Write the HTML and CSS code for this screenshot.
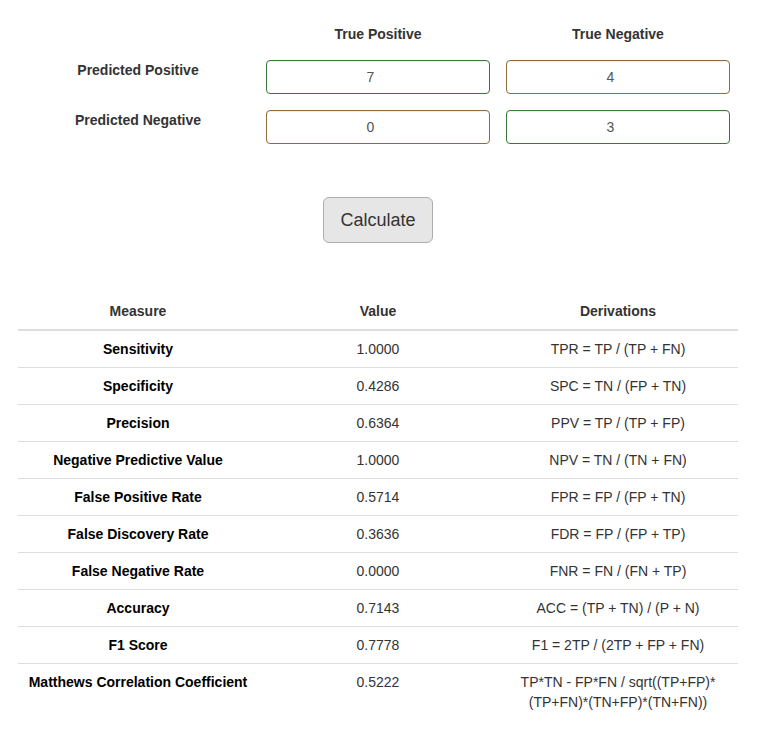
FILE: index.html
```html
<!DOCTYPE html>
<html>
<head>
<meta charset="utf-8">
<link rel="stylesheet" href="styles.css">
</head>
<body>
<div class="page">
  <div class="matrix">
    <div class="cell"></div>
    <div class="cell head">True Positive</div>
    <div class="cell head">True Negative</div>

    <div class="cell label">Predicted Positive</div>
    <div class="cell"><input class="field success" type="number" value="7"></div>
    <div class="cell"><input class="field warning" type="number" value="4"></div>

    <div class="cell label">Predicted Negative</div>
    <div class="cell"><input class="field warning" type="number" value="0"></div>
    <div class="cell"><input class="field success" type="number" value="3"></div>
  </div>

  <div class="actions">
    <button class="btn" type="button">Calculate</button>
  </div>

  <table class="results">
    <thead>
      <tr><th>Measure</th><th>Value</th><th>Derivations</th></tr>
    </thead>
    <tbody>
      <tr><th>Sensitivity</th><td>1.0000</td><td>TPR = TP / (TP + FN)</td></tr>
      <tr><th>Specificity</th><td>0.4286</td><td>SPC = TN / (FP + TN)</td></tr>
      <tr><th>Precision</th><td>0.6364</td><td>PPV = TP / (TP + FP)</td></tr>
      <tr><th>Negative Predictive Value</th><td>1.0000</td><td>NPV = TN / (TN + FN)</td></tr>
      <tr><th>False Positive Rate</th><td>0.5714</td><td>FPR = FP / (FP + TN)</td></tr>
      <tr><th>False Discovery Rate</th><td>0.3636</td><td>FDR = FP / (FP + TP)</td></tr>
      <tr><th>False Negative Rate</th><td>0.0000</td><td>FNR = FN / (FN + TP)</td></tr>
      <tr><th>Accuracy</th><td>0.7143</td><td>ACC = (TP + TN) / (P + N)</td></tr>
      <tr><th>F1 Score</th><td>0.7778</td><td>F1 = 2TP / (2TP + FP + FN)</td></tr>
      <tr><th>Matthews Correlation Coefficient</th><td>0.5222</td><td>TP*TN - FP*FN / sqrt((TP+FP)*<wbr>(TP+FN)*(TN+FP)*(TN+FN))</td></tr>
    </tbody>
  </table>
</div>
</body>
</html>
```

FILE: styles.css
```css
* { box-sizing: border-box; }

html, body {
  margin: 0;
  padding: 0;
  background: #fff;
}

body {
  font-family: "Liberation Sans", Arial, Helvetica, sans-serif;
  font-size: 14px;
  line-height: 20px;
  color: #333;
}

.page {
  width: 720px;
  margin-left: 18px;
  padding-top: 24px;
}

.matrix {
  display: grid;
  grid-template-columns: 240px 240px 240px;
  row-gap: 16px;
  align-items: start;
}

.cell {
  padding: 0 8px;
  text-align: center;
}

.head, .label {
  font-weight: bold;
  color: #333;
}

.field {
  display: block;
  width: 100%;
  height: 34px;
  padding: 6px 12px;
  font-family: inherit;
  font-size: 14px;
  line-height: 20px;
  color: #555;
  text-align: center;
  background: #fff;
  border: 1px solid #ccc;
  border-radius: 4px;
  box-shadow: inset 0 1px 1px rgba(0,0,0,0.075);
  outline: none;
}

.field.success { border-color: #3c763d; }
.field.warning { border-color: #8a6d3b; }

.actions {
  display: flex;
  justify-content: center;
  margin-top: 53px;
}

.btn {
  font-family: inherit;
  font-size: 18px;
  line-height: 24px;
  padding: 10px 16px;
  color: #333;
  background: #e6e6e6;
  border: 1px solid #adadad;
  border-radius: 6px;
  cursor: pointer;
}

.results {
  width: 720px;
  margin-top: 50px;
  border-collapse: collapse;
  border-spacing: 0;
  table-layout: fixed;
}

.results th, .results td {
  width: 240px;
  padding: 8px;
  line-height: 20px;
  text-align: center;
  vertical-align: top;
  border-top: 1px solid #ddd;
}

.results thead th {
  border-top: 0;
  border-bottom: 2px solid #ddd;
  vertical-align: bottom;
  color: #333;
}

.results tbody tr:first-child th,
.results tbody tr:first-child td {
  border-top: 0;
}

.results tbody th {
  color: #000;
  font-weight: bold;
}

.results td {
  color: #333;
}
```
